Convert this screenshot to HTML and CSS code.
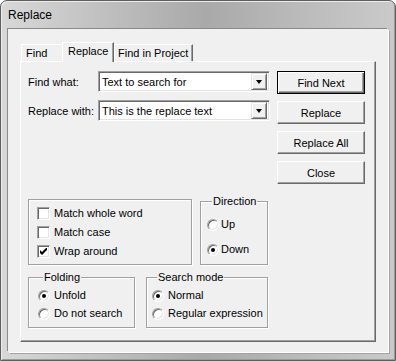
FILE: index.html
```html
<!DOCTYPE html>
<html lang="en">
<head>
    <meta charset="UTF-8">
    <title>Replace</title>
    <link rel="stylesheet" href="styles.css">
</head>
<body>

    <div class="window">
        <div class="titlebar">Replace</div>

        <div class="client">
            <!-- Tabs -->
            <div class="tabs">
                <div class="tab tab-find">Find</div>
                <div class="tab tab-replace selected">Replace</div>
                <div class="tab tab-project">Find in Project</div>
            </div>

            <div class="page">
                <div class="top">
                    <div class="fields">
                        <div class="field">
                            <label>Find what:</label>
                            <div class="combo"><span class="value">Text to search for</span><span class="drop"><span class="arrow"></span></span></div>
                        </div>
                        <div class="field">
                            <label>Replace with:</label>
                            <div class="combo"><span class="value">This is the replace text</span><span class="drop"><span class="arrow"></span></span></div>
                        </div>
                    </div>

                    <div class="buttons">
                        <button class="btn default">Find Next</button>
                        <button class="btn">Replace</button>
                        <button class="btn">Replace All</button>
                        <button class="btn">Close</button>
                    </div>
                </div>

                <!-- Options -->
                <div class="group-row first">
                    <div class="group options">
                        <div class="opt"><span class="check"></span>Match whole word</div>
                        <div class="opt"><span class="check"></span>Match case</div>
                        <div class="opt"><span class="check"><svg width="7" height="7" viewBox="0 0 7 7"><polygon points="0,2 2,4 7,-1 7,2 2,7 0,5" fill="#000"/></svg></span>Wrap around</div>
                    </div>
                    <div class="group direction">
                        <div class="group-title">Direction</div>
                        <div class="opt"><span class="radio"></span>Up</div>
                        <div class="opt"><span class="radio on"></span>Down</div>
                    </div>
                </div>

                <div class="group-row second">
                    <div class="group folding">
                        <div class="group-title">Folding</div>
                        <div class="opt"><span class="radio on"></span>Unfold</div>
                        <div class="opt"><span class="radio"></span>Do not search</div>
                    </div>
                    <div class="group mode">
                        <div class="group-title">Search mode</div>
                        <div class="opt"><span class="radio on"></span>Normal</div>
                        <div class="opt"><span class="radio"></span>Regular expression</div>
                    </div>
                </div>
            </div>
        </div>
    </div>

</body>
</html>
```

FILE: styles.css
```css
body {
    margin: 0;
    font-family: "Liberation Sans", Arial, sans-serif;
    font-size: 11px;
    color: #000;
    background: #fff;
}

.window {
    width: 396px;
    height: 361px;
    box-sizing: border-box;
    border: 1px solid #5e5e5e;
    border-radius: 7px 7px 0 0;
    background: linear-gradient(to right, #d8d8d8 0%, #bcbcbc 30%, #a9a9a9 52%, #bababa 75%, #cacaca 100%);
    box-shadow: inset 1px 1px 0 #ececec, inset -1px -1px 0 #9a9a9a;
    display: flex;
    flex-direction: column;
}

.titlebar {
    height: 28px;
    padding-left: 7px;
    display: flex;
    align-items: center;
    font-size: 12px;
}

.client {
    flex: 1;
    margin: 0 7px 8px 7px;
    padding: 13px 0 0 12px;
    background: #f0f0f0;
    box-shadow: -1px -1px 0 #8a8a8a, 1px 1px 0 #fff, 2px 2px 0 #a4a4a4;
}

/* Tabs */
.tabs {
    display: flex;
    align-items: flex-end;
    height: 20px;
    margin-bottom: -1px;
    position: relative;
    z-index: 1;
}

.tab {
    box-sizing: border-box;
    height: 17px;
    margin-bottom: 1px;
    line-height: 16px;
    border-top: 1px solid #fff;
    border-left: 1px solid #fff;
    border-right: 1px solid #696969;
    box-shadow: inset -1px 0 0 #a0a0a0;
    background: #f0f0f0;
    white-space: nowrap;
}

.tab-find {
    width: 41px;
    margin-left: 1px;
    padding-left: 4px;
    border-right: none;
    box-shadow: none;
}

.tab-replace {
    width: 52px;
    padding-left: 5px;
}

.tab-project {
    width: 79px;
    padding-left: 3px;
}

.tab.selected {
    height: 20px;
    margin-bottom: 0;
    line-height: 16px;
}

/* Page */
.page {
    width: 356px;
    height: 281px;
    box-sizing: border-box;
    padding: 9px 0 0 7px;
    border: 1px solid;
    border-color: #fff #696969 #696969 #fff;
    box-shadow: inset -1px -1px 0 #a0a0a0;
}

.top {
    display: flex;
    gap: 7px;
}

.fields {
    display: flex;
    flex-direction: column;
    gap: 8px;
}

.field {
    display: flex;
    align-items: center;
    height: 21px;
}

.field label {
    width: 70px;
}

.combo {
    width: 172px;
    height: 21px;
    box-sizing: border-box;
    display: flex;
    align-items: center;
    padding: 0 2px 0 3px;
    background: #fff;
    border: 1px solid;
    border-color: #a0a0a0 #fff #fff #a0a0a0;
    box-shadow: inset 1px 1px 0 #696969, inset -1px -1px 0 #e3e3e3;
}

.value {
    flex: 1;
    white-space: nowrap;
}

.drop {
    width: 16px;
    height: 17px;
    box-sizing: border-box;
    display: flex;
    align-items: center;
    justify-content: center;
    background: #f0f0f0;
    border: 1px solid;
    border-color: #e3e3e3 #696969 #696969 #e3e3e3;
    box-shadow: inset 1px 1px 0 #fff, inset -1px -1px 0 #a0a0a0;
}

.arrow {
    width: 0;
    height: 0;
    border-style: solid;
    border-width: 4px 3.5px 0 3.5px;
    border-color: #000 transparent transparent transparent;
}

.buttons {
    display: flex;
    flex-direction: column;
    gap: 7px;
}

.btn {
    width: 88px;
    height: 23px;
    padding: 0;
    font: inherit;
    color: #000;
    background: #f0f0f0;
    border: 1px solid;
    border-color: #fff #696969 #696969 #fff;
    box-shadow: inset -1px -1px 0 #a0a0a0;
}

.btn.default {
    border-color: #000;
    box-shadow: inset 1px 1px 0 #fff, inset -1px -1px 0 #696969, inset -2px -2px 0 #a0a0a0;
}

/* Group boxes */
.group-row {
    display: flex;
    align-items: flex-end;
}

.group-row.first {
    margin-top: 15px;
    gap: 8px;
}

.group-row.second {
    margin-top: 12px;
    gap: 11px;
}

.group {
    box-sizing: border-box;
    border: 1px solid #a0a0a0;
    box-shadow: inset 1px 1px 0 #fff, 1px 1px 0 #fff;
    line-height: 13px;
}

.group-title {
    display: table;
    margin: -7px 0 0 5px;
    padding: 0 1px;
    background: #f0f0f0;
}

.opt {
    display: flex;
    align-items: center;
    height: 13px;
    white-space: nowrap;
}

.options {
    width: 164px;
    height: 66px;
    padding: 7px 0 0 8px;
    display: flex;
    flex-direction: column;
    gap: 6px;
}

.direction {
    width: 68px;
    height: 64px;
    padding-left: 6px;
}

.direction .opt:nth-of-type(2) {
    margin-top: 10px;
}

.direction .opt + .opt {
    margin-top: 12px;
}

.direction .radio {
    margin-right: 2px;
}

.folding {
    width: 107px;
    height: 51px;
    padding-left: 9px;
}

.mode {
    width: 122px;
    height: 51px;
    padding-left: 5px;
}

.folding .opt:nth-of-type(2),
.mode .opt:nth-of-type(2) {
    margin-top: 5px;
}

.folding .opt + .opt,
.mode .opt + .opt {
    margin-top: 5px;
}

.check {
    width: 13px;
    height: 13px;
    box-sizing: border-box;
    margin-right: 4px;
    display: flex;
    align-items: center;
    justify-content: center;
    background: #fff;
    border: 1px solid;
    border-color: #a0a0a0 #fff #fff #a0a0a0;
    box-shadow: inset 1px 1px 0 #696969, inset -1px -1px 0 #e3e3e3;
}

.check svg {
    display: block;
}

.radio {
    width: 12px;
    height: 12px;
    box-sizing: border-box;
    margin-right: 4px;
    border-radius: 50%;
    display: flex;
    align-items: center;
    justify-content: center;
    background: #fff;
    border: 1px solid;
    border-color: #a0a0a0 #fff #fff #a0a0a0;
    box-shadow: inset 1px 1px 0 #696969, inset -1px -1px 0 #e3e3e3;
}

.radio.on::after {
    content: "";
    width: 4px;
    height: 4px;
    border-radius: 50%;
    background: #000;
}
```
